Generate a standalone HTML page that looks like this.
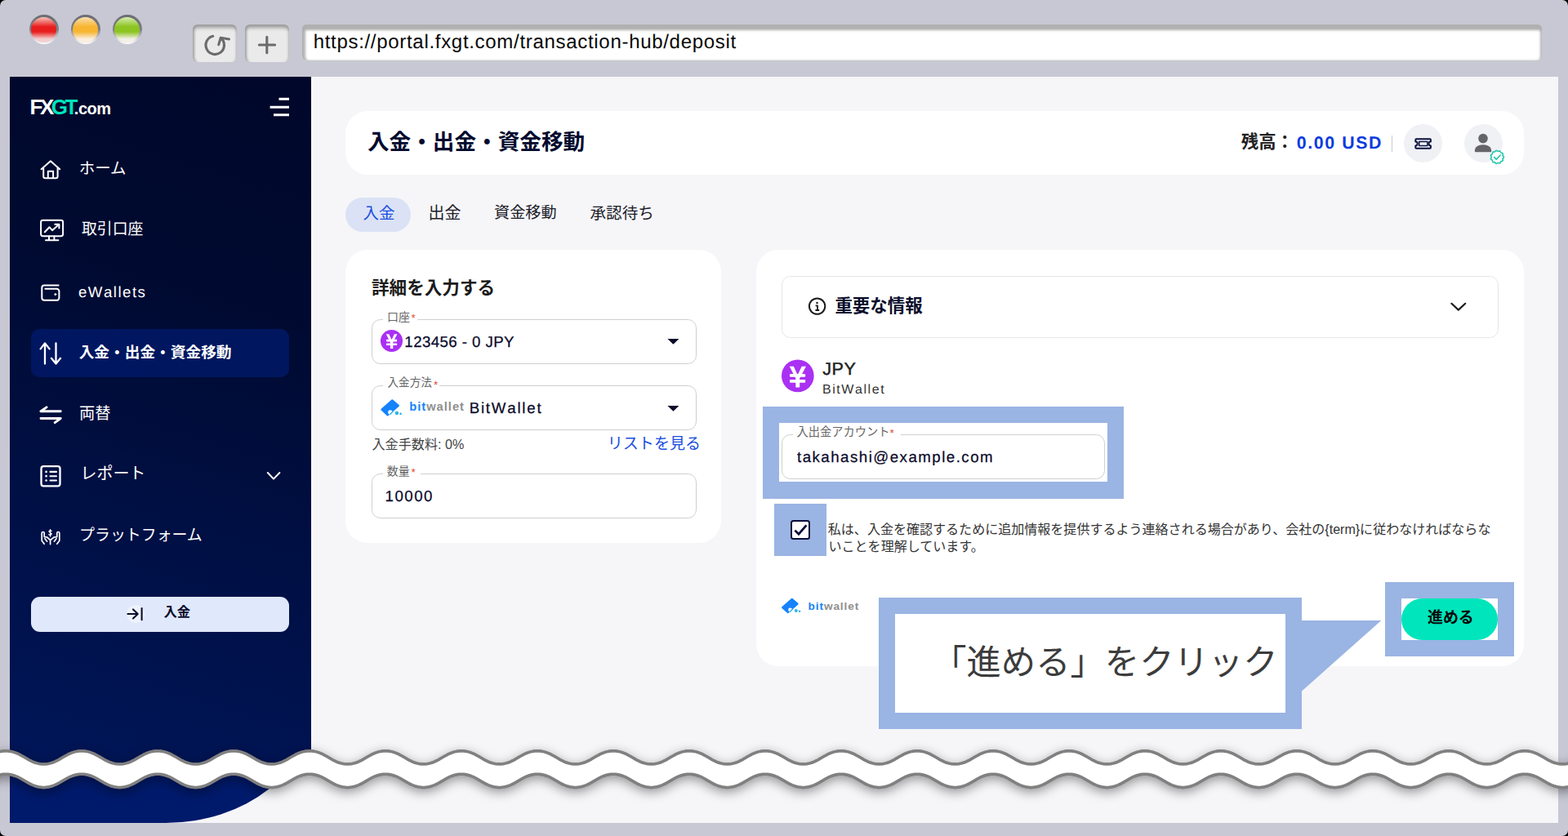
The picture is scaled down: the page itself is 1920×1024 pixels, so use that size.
<!DOCTYPE html><html lang="ja"><head><meta charset="utf-8"><title>FXGT deposit</title><style>
*{margin:0;padding:0;box-sizing:border-box}
html,body{width:1920px;height:1024px;overflow:hidden;background:#000}
body{position:relative;font-family:"Liberation Sans","Noto Sans CJK JP",sans-serif}
.a,.ht,.lt{position:absolute}
.ht{line-height:1.2;white-space:nowrap;font-family:"Liberation Sans","Noto Sans CJK JP",sans-serif;pointer-events:none}
.lt{white-space:nowrap;font-kerning:none;text-rendering:geometricPrecision;font-family:"Liberation Sans",sans-serif}
#win{left:0;top:0;width:1920px;height:1024px;background:#c8c8d4;border-radius:7px;overflow:hidden}
.light{width:36px;height:36px;border-radius:50%;top:18px;background:linear-gradient(180deg,#6c6c72 0%,#7e7e84 50%,#c4c4ca 76%,#ffffff 100%)}
.light i{position:absolute;left:2.5px;top:2.5px;right:2.5px;bottom:2.5px;border-radius:50%;display:block}
.cbtn{top:30px;height:46px;background:#eaeaea;border-radius:6px;box-shadow:inset 0 7px 4px -3px #9a9a9a, inset 5px 0 3px -3px #a0a0a0, inset -4px 0 3px -3px #b4b4b4}
#url{left:370px;top:30px;width:1517.8px;height:44px;background:#fff;border-radius:5px;box-shadow:inset 0 10px 3px -3px #b0b0b0, inset 7px 0 3px -3px #b2b2b2, inset -5px 0 3px -3px #b4b4b4, inset 0 -2px 2px -1px #e4e4e4}
#content{left:12px;top:94px;width:1896px;height:914px;background:#f6f6f9;overflow:hidden}
.card{background:#fff;border-radius:27px}
.field{border:1.33px solid #cfcfcf;border-radius:10.67px}
.notch{background:#fff;height:4px}
.md{-webkit-text-stroke:.45px currentColor}.sm{-webkit-text-stroke:.25px currentColor}
</style></head><body>
<div id="win" class="a">
<div class="a light" style="left:35.7px"><i style="background:linear-gradient(180deg,#f6c4bc 0%,#e81e1e 38%,#e81e1e 58%,#f3cfcf 86%,#f3cfcf 100%)"></i></div>
<div class="a light" style="left:86.7px"><i style="background:linear-gradient(180deg,#fbe0b0 0%,#f7b531 38%,#f7b531 58%,#fbeede 86%,#fbeede 100%)"></i></div>
<div class="a light" style="left:137.7px"><i style="background:linear-gradient(180deg,#d6edb0 0%,#8cc421 38%,#8cc421 58%,#f3f0e6 86%,#f3f0e6 100%)"></i></div>
<div class="a cbtn" style="left:236px;width:54px"></div>
<div class="a cbtn" style="left:300px;width:54px"></div>
<div class="a" id="url"></div>
<span class="lt " style="left:383.64px;top:40.00px;font-size:24.00px;line-height:24.00px;letter-spacing:0.695px;color:#080808;">https://portal.fxgt.com/transaction-hub/deposit</span>
<div class="a" id="content"></div>
<div class="a" style="left:12px;top:94px;width:369.2px;height:848px;background:linear-gradient(197deg,#00072a 0%,#000a30 30%,#001046 66%,#001659 100%)"></div>
<div class="a" style="left:12px;top:942px;width:369.2px;height:65.8px;overflow:hidden"><div class="a" style="left:0;top:-300px;width:369.2px;height:365.8px;background:#001a6b;border-bottom-right-radius:178px 141px"></div></div>
<div class="a" style="left:37.7px;top:402.8px;width:316.3px;height:59px;border-radius:10.67px;background:linear-gradient(90deg,#001660,#00175f)"></div>
<div class="a" style="left:37.7px;top:730.5px;width:316.3px;height:43.5px;border-radius:11px;background:#e0e8fb"></div>
<div class="a" style="left:154.6px;top:740.5px;width:22px;height:22px;border-radius:50%;background:#eef2fb"></div>
<div class="a card" style="left:423px;top:136px;width:1443px;height:78.2px"></div>
<div class="a" style="left:1704px;top:165.6px;width:1.33px;height:20.3px;background:#c9c9c9"></div>
<div class="a" style="left:1718.7px;top:152.3px;width:47px;height:47px;border-radius:50%;background:#f0f1f5"></div>
<div class="a" style="left:1792.6px;top:152.3px;width:47px;height:47px;border-radius:50%;background:#f0f1f5"></div>
<div class="a" style="left:423px;top:241.8px;width:80px;height:42.7px;border-radius:22px;background:#dbe2f5"></div>
<div class="a card" style="left:423px;top:305.5px;width:460px;height:359.7px"></div>
<div class="a field" style="left:455px;top:390.7px;width:397.5px;height:55px"></div>
<div class="a notch" style="left:468.5px;top:389.7px;width:42.5px"></div>
<div class="a field" style="left:455px;top:472.2px;width:397.5px;height:54.5px"></div>
<div class="a notch" style="left:468.5px;top:471.2px;width:69.5px"></div>
<div class="a field" style="left:455px;top:580.2px;width:397.5px;height:54.7px"></div>
<div class="a notch" style="left:468.5px;top:579.2px;width:46.5px"></div>
<div class="a card" style="left:926.3px;top:305.5px;width:940px;height:510.8px"></div>
<div class="a" style="left:957px;top:337.5px;width:877.5px;height:76px;border:1.33px solid #e6e6e8;border-radius:10.67px"></div>
<div class="a" style="left:934px;top:498px;width:441.8px;height:112.8px;background:#9ab4e3"></div>
<div class="a" style="left:954px;top:517.5px;width:402px;height:72.5px;background:#fff"></div>
<div class="a field" style="left:957px;top:532px;width:395.5px;height:55.2px"></div>
<div class="a notch" style="left:970.5px;top:531px;width:132.0px"></div>
<div class="a" style="left:948.4px;top:617px;width:63.3px;height:63.5px;background:#9ab4e3"></div>
<div class="a" style="left:968.3px;top:637px;width:23.4px;height:23.8px;border:2.8px solid #0a0d3a;border-radius:3.5px;background:#fff"></div>
<div class="a" style="left:1696.3px;top:712.5px;width:158px;height:91.3px;background:#9ab4e3"></div>
<div class="a" style="left:1715.8px;top:732.5px;width:118.5px;height:51.3px;background:#fff"></div>
<div class="a" style="left:1716.2px;top:732.5px;width:118.1px;height:51.3px;border-radius:26px;background:#00e5bc"></div>
<svg class="a" style="left:0;top:0" width="1920" height="1024"><path fill="#9ab4e3" d="M1593.5 760H1691.3L1593.5 847z"/></svg>
<div class="a" style="left:1076.2px;top:731.8px;width:517.5px;height:161.5px;background:#9ab4e3"></div>
<div class="a" style="left:1095.8px;top:751.8px;width:478.5px;height:121.5px;background:#fff"></div>
<svg class="a" style="left:0;top:0" width="1920" height="1024" viewBox="0 0 1920 1024" fill="none" stroke-linecap="round" stroke-linejoin="round">
<!-- reload / plus -->
<g stroke="#6b6b6b" stroke-width="3.1">
<path d="M260.72 44.34A11.25 11.25 0 1 0 270.33 46.56"/>
<path d="M280.5 47.9L270.3 46.3 267.7 54.8" stroke-width="3"/>
<path d="M317.4 55H336.6M326.8 45.4V64.8" stroke-width="3.1"/>
</g>
<!-- hamburger -->
<g stroke="#fff" stroke-width="3" stroke-linecap="butt">
<path d="M341.5 121.3H354M330.6 131.2H354M335 140.7H354"/>
</g>
<!-- sidebar icons -->
<g stroke="#fff" stroke-width="2">
<path d="M50.6 207.3L61.9 197.3 73.2 207.3M53.2 205.5V216a2.3 2.3 0 0 0 2.3 2.3H68.3a2.3 2.3 0 0 0 2.3-2.3V205.5M58.8 217.8V209.8H65.1V217.8"/>
<rect x="50.1" y="269.8" width="27" height="19.4" rx="2.4"/>
<path d="M60 289.6V293.6M66.4 289.6V293.6M56 294.2H71.4M54.8 284.2L60.5 278.2 64 282.2 72 275M67.3 274.7H72.4V279.6"/>
<path d="M71.6 349.4H54.3a3 3 0 0 0-3 3V364.8a3 3 0 0 0 3 3H69.4a3 3 0 0 0 3-3V356.8a3 3 0 0 0-3-3H55.4"/>
<circle cx="67.8" cy="360.6" r="1" fill="#fff" stroke-width="1"/>
<path d="M55 445.5V420.6M49.6 427.4L55 420.4 60.6 427.4M68.5 420.4V445.4M62.9 438.8L68.5 445.6 74.1 438.8" stroke-width="2.3"/>
<path d="M50 503.8H74.2M50 503.8L57 498.9M50 512.5H74.2M74.2 512.5L67.2 517.6" stroke-width="2.9"/>
<rect x="50.5" y="571.2" width="23" height="24.2" rx="2.8" stroke-width="2.3"/>
<path d="M61.5 577.9H69M61.5 583.2H69M61.5 588.5H69" stroke-width="2.1"/>
<path d="M56.6 577.9h.01M56.6 583.2h.01M56.6 588.5h.01" stroke-width="2.7"/>
<path d="M327.8 579L335 586.6 342.4 579" stroke-width="2"/>
</g>
<!-- platform (hands + $) -->
<g stroke="#fff" stroke-width="1.7">
<path d="M54.2 666.2L51.2 662.2V653a1.5 1.5 0 0 1 3 0V657.6L57.6 658 61.6 661.6V666.6M55 659.8L57.6 663.2"/>
<path d="M69.8 666.2L72.8 662.2V653a1.5 1.5 0 0 0-3 0V657.6L66.2 658 61.6 661.6M69 659.8L66.4 663.2"/>
<path d="M63.2 650.3C62.6 649.6 60 649.6 60 651.1 60 652.7 63.2 652.3 63.2 654 63.2 655.6 60.4 655.5 59.8 654.6M61.6 648.6V657" stroke-width="1.3"/>
</g>
<!-- deposit button icon -->
<g stroke="#0a0d2c" stroke-width="2">
<path d="M156.4 752H168.6M163 746.4L168.7 752 163 757.6M173.6 745V759.2" stroke-width="2.1"/>
</g>
<!-- header: ticket -->
<g stroke="#0a1240" stroke-width="2">
<path d="M1733.3 171.2a1 1 0 0 1 1-1H1750.9a1 1 0 0 1 1 1V173.6a2.4 2.4 0 0 0 0 4.8V180.8a1 1 0 0 1-1 1H1734.3a1 1 0 0 1-1-1V178.4a2.4 2.4 0 0 0 0-4.8z"/>
<rect x="1737.7" y="173.5" width="10.2" height="5" stroke-width="1.5"/>
</g>
<!-- person -->
<g fill="#646469" stroke="none">
<circle cx="1816" cy="169.6" r="5.8"/>
<path d="M1805.8 185.2C1805.8 180 1810 177.3 1816 177.3S1826.2 180 1826.2 185.2a1 1 0 0 1-1 1H1806.8a1 1 0 0 1-1-1z"/>
</g>
<!-- verified badge -->
<g>
<path fill="#fff" stroke="#1ac5a5" stroke-width="1.5" d="M1841.5 192.4L1841.4 192.8L1841.1 193.2L1840.7 193.6L1840.4 193.9L1840.1 194.2L1840.0 194.6L1840.1 195.0L1840.2 195.5L1840.3 196.0L1840.3 196.4L1840.1 196.8L1839.8 197.1L1839.4 197.3L1838.9 197.4L1838.4 197.5L1838.0 197.6L1837.8 197.9L1837.6 198.3L1837.4 198.7L1837.2 199.2L1837.0 199.6L1836.6 199.8L1836.2 199.9L1835.7 199.8L1835.2 199.6L1834.8 199.4L1834.4 199.4L1834.0 199.5L1833.7 199.7L1833.3 200.0L1832.9 200.3L1832.5 200.5L1832.0 200.4L1831.6 200.2L1831.3 199.9L1831.0 199.5L1830.7 199.1L1830.4 198.8L1830.1 198.7L1829.6 198.7L1829.1 198.8L1828.6 198.8L1828.2 198.7L1827.9 198.4L1827.7 198.0L1827.6 197.6L1827.5 197.1L1827.5 196.6L1827.4 196.2L1827.1 196.0L1826.8 195.7L1826.3 195.5L1825.9 195.2L1825.6 194.9L1825.4 194.5L1825.5 194.1L1825.7 193.6L1826.0 193.2L1826.2 192.8L1826.2 192.4L1826.2 192.0L1826.0 191.6L1825.7 191.2L1825.5 190.7L1825.4 190.3L1825.6 189.9L1825.9 189.6L1826.3 189.3L1826.8 189.1L1827.1 188.8L1827.4 188.6L1827.5 188.2L1827.5 187.7L1827.6 187.2L1827.7 186.8L1827.9 186.4L1828.2 186.1L1828.6 186.0L1829.1 186.0L1829.6 186.1L1830.1 186.1L1830.4 186.0L1830.7 185.7L1831.0 185.3L1831.3 184.9L1831.6 184.6L1832.0 184.4L1832.5 184.3L1832.9 184.5L1833.3 184.8L1833.7 185.1L1834.0 185.3L1834.4 185.4L1834.8 185.4L1835.2 185.2L1835.7 185.0L1836.2 184.9L1836.6 185.0L1837.0 185.2L1837.2 185.6L1837.4 186.1L1837.6 186.5L1837.8 186.9L1838.0 187.2L1838.4 187.3L1838.9 187.4L1839.4 187.5L1839.8 187.7L1840.1 188.0L1840.3 188.4L1840.3 188.8L1840.2 189.3L1840.1 189.8L1840.0 190.2L1840.1 190.6L1840.4 190.9L1840.7 191.2L1841.1 191.6L1841.4 192.0z"/>
<path d="M1829.6 192.6L1832.2 195.2 1837.2 190" stroke="#1ac5a5" stroke-width="1.6"/>
</g>
<!-- yen small -->
<g stroke="none">
<circle cx="479.5" cy="417.5" r="13.55" fill="#aa30f3"/>
<path fill="#fff" d="M472.8 409.3H476.3L479.55 416.2 482.85 409.3H486.4L481.3 419.2V427.1H477.9V419.2z"/>
<rect x="473" y="415.8" width="13.1" height="2.6" rx=".7" fill="#fff"/><rect x="473" y="420.5" width="13.1" height="2.6" rx=".7" fill="#fff"/>
<circle cx="976.8" cy="460.4" r="19.85" fill="#aa30f3"/>
<path fill="#fff" d="M966.75 448.7H971.8L976.7 459.2 981.7 448.7H987L979.2 463.5V474.6H974.3V463.5z"/>
<rect x="967" y="457.9" width="19.2" height="3.8" rx="1" fill="#fff"/><rect x="967" y="465" width="19.2" height="3.8" rx="1" fill="#fff"/>
</g>
<!-- dropdown arrows -->
<path d="M817.4 415.1H831.4L824.4 421.8zM817.4 497H831.4L824.4 503.7z" fill="#0a0a2a" stroke="none"/>
<!-- info -->
<g stroke="#1c1c1c" stroke-width="2">
<circle cx="1000.6" cy="375.1" r="9.7"/>
<path d="M998.6 374.4H1001V379.8M998.4 380H1003.2" stroke-width="1.8" stroke-linecap="butt"/>
<circle cx="1000.5" cy="371" r="1.25" fill="#1c1c1c" stroke="none"/>
<path d="M1777.4 371.8L1785.8 379.6 1794.2 371.8" stroke-width="2.2"/>
</g>
<!-- check -->
<path d="M973.4 649.6L978 654.2 987.4 643.4" stroke="#0a0d3a" stroke-width="2.7" stroke-linecap="butt" stroke-linejoin="miter"/>
<!-- bitwallet logos -->
<g id="bw1" stroke="none">
<path d="M467.5 501.7L480.3 490.4 487.8 496.8 474.7 508.3z" fill="#1583fb" stroke="#1583fb" stroke-width="2.4" stroke-linejoin="round"/>
<circle cx="477.9" cy="504.9" r="2.7" fill="#fff"/>
<path d="M478 507.2L481 504" stroke="#2db4e8" stroke-width="1.6" stroke-linecap="round"/>
<circle cx="485.9" cy="506" r="2.2" fill="#2db4e8"/>
<circle cx="490.6" cy="506.8" r="1.4" fill="#2db4e8"/>
</g>
<use href="#bw1" transform="translate(957 732.6) scale(0.905) translate(-466.2 -489)"/>
</svg>

<span class="ht" style="left:36.5px;top:118.4px;font-size:26px;line-height:26px;font-weight:bold;letter-spacing:-3.5px;color:#ffffff;">FX<span style="color:#00e5bc">GT</span><span style="font-size:20px;letter-spacing:-0.5px;margin-left:-1px">.com</span></span>
<span class="ht" style="left:501.2px;top:490.2px;font-size:14.69px;font-weight:bold;letter-spacing:1px;color:#8f8f8f;"><span style="color:#1583fb">bit</span>wallet</span>
<span class="ht" style="left:989.5px;top:735.1px;font-size:13.65px;font-weight:bold;letter-spacing:0.9px;color:#8f8f8f;"><span style="color:#1583fb">bit</span>wallet</span>
<span class="ht" style="left:96.7px;top:195.3px;font-size:19.47px;color:#ffffff;">ホーム</span>
<span class="ht" style="left:100.0px;top:270.4px;font-size:18.87px;color:#ffffff;">取引口座</span>
<span class="lt " style="left:95.91px;top:349.00px;font-size:18.67px;line-height:18.67px;letter-spacing:1.497px;color:#ffffff;">eWallets</span>
<span class="ht" style="left:96.7px;top:420.6px;font-size:18.71px;font-weight:bold;color:#ffffff;">入金・出金・資金移動</span>
<span class="ht" style="left:97.1px;top:495.0px;font-size:19.28px;color:#ffffff;">両替</span>
<span class="ht" style="left:98.5px;top:569.3px;font-size:19.96px;color:#ffffff;">レポート</span>
<span class="ht" style="left:97.1px;top:644.7px;font-size:18.91px;color:#ffffff;">プラットフォーム</span>
<span class="ht" style="left:200.4px;top:740.1px;font-size:16.37px;font-weight:bold;color:#0a0d2c;">入金</span>
<span class="ht" style="left:450.0px;top:158.6px;font-size:26.62px;font-weight:bold;color:#020a2e;">入金・出金・資金移動</span>
<span class="ht" style="left:1519.8px;top:162.2px;font-size:21.40px;font-weight:bold;color:#222;">残高：</span>
<span class="lt " style="left:1587.86px;top:165.00px;font-size:21.33px;line-height:21.33px;letter-spacing:1.581px;color:#0b3be0;font-weight:bold;">0.00 USD</span>
<span class="ht" style="left:444.5px;top:249.8px;font-size:19.45px;color:#1c4fe0;">入金</span>
<span class="ht" style="left:524.5px;top:249.5px;font-size:19.97px;color:#1c1c28;">出金</span>
<span class="ht" style="left:605.0px;top:250.0px;font-size:19.15px;color:#1c1c28;">資金移動</span>
<span class="ht" style="left:722.5px;top:249.7px;font-size:19.61px;color:#1c1c28;">承認待ち</span>
<span class="ht" style="left:455.0px;top:339.6px;font-size:21.59px;font-weight:bold;color:#1c1c1c;">詳細を入力する</span>
<span class="ht" style="left:474.0px;top:379.7px;font-size:14.00px;color:#666;">口座</span>
<span class="ht" style="left:474.5px;top:461.2px;font-size:13.63px;color:#666;">入金方法</span>
<span class="ht" style="left:473.8px;top:569.1px;font-size:13.97px;color:#666;">数量</span>
<span class="ht" style="left:975.5px;top:520.5px;font-size:14.25px;color:#666;">入出金アカウント</span>
<span class="lt" style="left:503.6px;top:383.2px;font-size:13.5px;line-height:13.5px;color:#e0482e">*</span>
<span class="lt" style="left:531px;top:464.5px;font-size:13.5px;line-height:13.5px;color:#e0482e">*</span>
<span class="lt" style="left:503.6px;top:572.4px;font-size:13.5px;line-height:13.5px;color:#e0482e">*</span>
<span class="lt" style="left:1089.4px;top:523.6px;font-size:13.5px;line-height:13.5px;color:#e0482e">*</span>
<span class="lt sm" style="left:495.33px;top:410.00px;font-size:18.67px;line-height:18.67px;letter-spacing:0.433px;color:#0a0a2a;">123456 - 0 JPY</span>
<span class="lt sm" style="left:574.72px;top:491.00px;font-size:18.67px;line-height:18.67px;letter-spacing:1.782px;color:#0a0a2a;">BitWallet</span>
<span class="ht" style="left:455.5px;top:534.8px;font-size:16.13px;color:#444;">入金手数料: 0%</span>
<span class="ht" style="left:743.8px;top:533.0px;font-size:19.04px;color:#1c4fe0;">リストを見る</span>
<span class="lt sm" style="left:471.58px;top:599.00px;font-size:18.67px;line-height:18.67px;letter-spacing:1.496px;color:#0a0a2a;">10000</span>
<span class="ht" style="left:1022.4px;top:362.5px;font-size:21.47px;font-weight:bold;color:#0a0d2c;">重要な情報</span>
<span class="lt md" style="left:1007.16px;top:441.00px;font-size:21.60px;line-height:21.60px;letter-spacing:0.599px;color:#222;">JPY</span>
<span class="lt " style="left:1006.94px;top:470.00px;font-size:16.00px;line-height:16.00px;letter-spacing:1.569px;color:#333;">BitWallet</span>
<span class="lt sm" style="left:975.97px;top:551.00px;font-size:18.67px;line-height:18.67px;letter-spacing:1.493px;color:#0a0a2a;">takahashi@example.com</span>
<span class="ht" style="left:1013.8px;top:639.2px;font-size:16.04px;color:#333;">私は、入金を確認するために追加情報を提供するよう連絡される場合があり、会社の{term}に従わなければならな</span>
<span class="ht" style="left:1014.5px;top:659.5px;font-size:16.04px;color:#333;">いことを理解しています。</span>
<span class="ht" style="left:1748.0px;top:746.1px;font-size:18.93px;font-weight:bold;color:#0a0a0a;">進める</span>
<span class="ht" style="left:1141.2px;top:787.3px;font-size:42.34px;color:#3c3c3c;">「進める」をクリック</span>
<svg class="a" style="left:0;top:0" width="1920" height="1024" viewBox="0 0 1920 1024" stroke-linejoin="round"><defs><path id="wp" d="M-86.0 919.8L-83.0 919.9L-80.0 920.4L-77.0 921.1L-74.0 922.1L-71.0 923.3L-68.0 924.9L-65.0 926.6L-62.0 928.3L-59.0 930.1L-56.0 931.7L-53.0 933.1L-50.0 934.3L-47.0 935.1L-44.0 935.7L-41.0 936.0L-38.0 936.0L-35.0 935.7L-32.0 935.1L-29.0 934.3L-26.0 933.1L-23.0 931.7L-20.0 930.1L-17.0 928.3L-14.0 926.6L-11.0 924.9L-8.0 923.3L-5.0 922.1L-2.0 921.1L1.0 920.4L4.0 919.9L7.0 919.8L10.0 919.9L13.0 920.4L16.0 921.1L19.0 922.1L22.0 923.3L25.0 924.9L28.0 926.6L31.0 928.3L34.0 930.1L37.0 931.7L40.0 933.1L43.0 934.3L46.0 935.1L49.0 935.7L52.0 936.0L55.0 936.0L58.0 935.7L61.0 935.1L64.0 934.3L67.0 933.1L70.0 931.7L73.0 930.1L76.0 928.3L79.0 926.6L82.0 924.9L85.0 923.3L88.0 922.1L91.0 921.1L94.0 920.4L97.0 919.9L100.0 919.8L103.0 919.9L106.0 920.4L109.0 921.1L112.0 922.1L115.0 923.3L118.0 924.9L121.0 926.6L124.0 928.3L127.0 930.1L130.0 931.7L133.0 933.1L136.0 934.3L139.0 935.1L142.0 935.7L145.0 936.0L148.0 936.0L151.0 935.7L154.0 935.1L157.0 934.3L160.0 933.1L163.0 931.7L166.0 930.1L169.0 928.3L172.0 926.6L175.0 924.9L178.0 923.3L181.0 922.1L184.0 921.1L187.0 920.4L190.0 919.9L193.0 919.8L196.0 919.9L199.0 920.4L202.0 921.1L205.0 922.1L208.0 923.3L211.0 924.9L214.0 926.6L217.0 928.3L220.0 930.1L223.0 931.7L226.0 933.1L229.0 934.3L232.0 935.1L235.0 935.7L238.0 936.0L241.0 936.0L244.0 935.7L247.0 935.1L250.0 934.3L253.0 933.1L256.0 931.7L259.0 930.1L262.0 928.3L265.0 926.6L268.0 924.9L271.0 923.3L274.0 922.1L277.0 921.1L280.0 920.4L283.0 919.9L286.0 919.8L289.0 919.9L292.0 920.4L295.0 921.1L298.0 922.1L301.0 923.3L304.0 924.9L307.0 926.6L310.0 928.3L313.0 930.1L316.0 931.7L319.0 933.1L322.0 934.3L325.0 935.1L328.0 935.7L331.0 936.0L334.0 936.0L337.0 935.7L340.0 935.1L343.0 934.3L346.0 933.1L349.0 931.7L352.0 930.1L355.0 928.3L358.0 926.6L361.0 924.9L364.0 923.3L367.0 922.1L370.0 921.1L373.0 920.4L376.0 919.9L379.0 919.8L382.0 919.9L385.0 920.4L388.0 921.1L391.0 922.1L394.0 923.3L397.0 924.9L400.0 926.6L403.0 928.3L406.0 930.1L409.0 931.7L412.0 933.1L415.0 934.3L418.0 935.1L421.0 935.7L424.0 936.0L427.0 936.0L430.0 935.7L433.0 935.1L436.0 934.3L439.0 933.1L442.0 931.7L445.0 930.1L448.0 928.3L451.0 926.6L454.0 924.9L457.0 923.3L460.0 922.1L463.0 921.1L466.0 920.4L469.0 919.9L472.0 919.8L475.0 919.9L478.0 920.4L481.0 921.1L484.0 922.1L487.0 923.3L490.0 924.9L493.0 926.6L496.0 928.3L499.0 930.1L502.0 931.7L505.0 933.1L508.0 934.3L511.0 935.1L514.0 935.7L517.0 936.0L520.0 936.0L523.0 935.7L526.0 935.1L529.0 934.3L532.0 933.1L535.0 931.7L538.0 930.1L541.0 928.3L544.0 926.6L547.0 924.9L550.0 923.3L553.0 922.1L556.0 921.1L559.0 920.4L562.0 919.9L565.0 919.8L568.0 919.9L571.0 920.4L574.0 921.1L577.0 922.1L580.0 923.3L583.0 924.9L586.0 926.6L589.0 928.3L592.0 930.1L595.0 931.7L598.0 933.1L601.0 934.3L604.0 935.1L607.0 935.7L610.0 936.0L613.0 936.0L616.0 935.7L619.0 935.1L622.0 934.3L625.0 933.1L628.0 931.7L631.0 930.1L634.0 928.3L637.0 926.6L640.0 924.9L643.0 923.3L646.0 922.1L649.0 921.1L652.0 920.4L655.0 919.9L658.0 919.8L661.0 919.9L664.0 920.4L667.0 921.1L670.0 922.1L673.0 923.3L676.0 924.9L679.0 926.6L682.0 928.3L685.0 930.1L688.0 931.7L691.0 933.1L694.0 934.3L697.0 935.1L700.0 935.7L703.0 936.0L706.0 936.0L709.0 935.7L712.0 935.1L715.0 934.3L718.0 933.1L721.0 931.7L724.0 930.1L727.0 928.3L730.0 926.6L733.0 924.9L736.0 923.3L739.0 922.1L742.0 921.1L745.0 920.4L748.0 919.9L751.0 919.8L754.0 919.9L757.0 920.4L760.0 921.1L763.0 922.1L766.0 923.3L769.0 924.9L772.0 926.6L775.0 928.3L778.0 930.1L781.0 931.7L784.0 933.1L787.0 934.3L790.0 935.1L793.0 935.7L796.0 936.0L799.0 936.0L802.0 935.7L805.0 935.1L808.0 934.3L811.0 933.1L814.0 931.7L817.0 930.1L820.0 928.3L823.0 926.6L826.0 924.9L829.0 923.3L832.0 922.1L835.0 921.1L838.0 920.4L841.0 919.9L844.0 919.8L847.0 919.9L850.0 920.4L853.0 921.1L856.0 922.1L859.0 923.3L862.0 924.9L865.0 926.6L868.0 928.3L871.0 930.1L874.0 931.7L877.0 933.1L880.0 934.3L883.0 935.1L886.0 935.7L889.0 936.0L892.0 936.0L895.0 935.7L898.0 935.1L901.0 934.3L904.0 933.1L907.0 931.7L910.0 930.1L913.0 928.3L916.0 926.6L919.0 924.9L922.0 923.3L925.0 922.1L928.0 921.1L931.0 920.4L934.0 919.9L937.0 919.8L940.0 919.9L943.0 920.4L946.0 921.1L949.0 922.1L952.0 923.3L955.0 924.9L958.0 926.6L961.0 928.3L964.0 930.1L967.0 931.7L970.0 933.1L973.0 934.3L976.0 935.1L979.0 935.7L982.0 936.0L985.0 936.0L988.0 935.7L991.0 935.1L994.0 934.3L997.0 933.1L1000.0 931.7L1003.0 930.1L1006.0 928.3L1009.0 926.6L1012.0 924.9L1015.0 923.3L1018.0 922.1L1021.0 921.1L1024.0 920.4L1027.0 919.9L1030.0 919.8L1033.0 919.9L1036.0 920.4L1039.0 921.1L1042.0 922.1L1045.0 923.3L1048.0 924.9L1051.0 926.6L1054.0 928.3L1057.0 930.1L1060.0 931.7L1063.0 933.1L1066.0 934.3L1069.0 935.1L1072.0 935.7L1075.0 936.0L1078.0 936.0L1081.0 935.7L1084.0 935.1L1087.0 934.3L1090.0 933.1L1093.0 931.7L1096.0 930.1L1099.0 928.3L1102.0 926.6L1105.0 924.9L1108.0 923.3L1111.0 922.1L1114.0 921.1L1117.0 920.4L1120.0 919.9L1123.0 919.8L1126.0 919.9L1129.0 920.4L1132.0 921.1L1135.0 922.1L1138.0 923.3L1141.0 924.9L1144.0 926.6L1147.0 928.3L1150.0 930.1L1153.0 931.7L1156.0 933.1L1159.0 934.3L1162.0 935.1L1165.0 935.7L1168.0 936.0L1171.0 936.0L1174.0 935.7L1177.0 935.1L1180.0 934.3L1183.0 933.1L1186.0 931.7L1189.0 930.1L1192.0 928.3L1195.0 926.6L1198.0 924.9L1201.0 923.3L1204.0 922.1L1207.0 921.1L1210.0 920.4L1213.0 919.9L1216.0 919.8L1219.0 919.9L1222.0 920.4L1225.0 921.1L1228.0 922.1L1231.0 923.3L1234.0 924.9L1237.0 926.6L1240.0 928.3L1243.0 930.1L1246.0 931.7L1249.0 933.1L1252.0 934.3L1255.0 935.1L1258.0 935.7L1261.0 936.0L1264.0 936.0L1267.0 935.7L1270.0 935.1L1273.0 934.3L1276.0 933.1L1279.0 931.7L1282.0 930.1L1285.0 928.3L1288.0 926.6L1291.0 924.9L1294.0 923.3L1297.0 922.1L1300.0 921.1L1303.0 920.4L1306.0 919.9L1309.0 919.8L1312.0 919.9L1315.0 920.4L1318.0 921.1L1321.0 922.1L1324.0 923.3L1327.0 924.9L1330.0 926.6L1333.0 928.3L1336.0 930.1L1339.0 931.7L1342.0 933.1L1345.0 934.3L1348.0 935.1L1351.0 935.7L1354.0 936.0L1357.0 936.0L1360.0 935.7L1363.0 935.1L1366.0 934.3L1369.0 933.1L1372.0 931.7L1375.0 930.1L1378.0 928.3L1381.0 926.6L1384.0 924.9L1387.0 923.3L1390.0 922.1L1393.0 921.1L1396.0 920.4L1399.0 919.9L1402.0 919.8L1405.0 919.9L1408.0 920.4L1411.0 921.1L1414.0 922.1L1417.0 923.3L1420.0 924.9L1423.0 926.6L1426.0 928.3L1429.0 930.1L1432.0 931.7L1435.0 933.1L1438.0 934.3L1441.0 935.1L1444.0 935.7L1447.0 936.0L1450.0 936.0L1453.0 935.7L1456.0 935.1L1459.0 934.3L1462.0 933.1L1465.0 931.7L1468.0 930.1L1471.0 928.3L1474.0 926.6L1477.0 924.9L1480.0 923.3L1483.0 922.1L1486.0 921.1L1489.0 920.4L1492.0 919.9L1495.0 919.8L1498.0 919.9L1501.0 920.4L1504.0 921.1L1507.0 922.1L1510.0 923.3L1513.0 924.9L1516.0 926.6L1519.0 928.3L1522.0 930.1L1525.0 931.7L1528.0 933.1L1531.0 934.3L1534.0 935.1L1537.0 935.7L1540.0 936.0L1543.0 936.0L1546.0 935.7L1549.0 935.1L1552.0 934.3L1555.0 933.1L1558.0 931.7L1561.0 930.1L1564.0 928.3L1567.0 926.6L1570.0 924.9L1573.0 923.3L1576.0 922.1L1579.0 921.1L1582.0 920.4L1585.0 919.9L1588.0 919.8L1591.0 919.9L1594.0 920.4L1597.0 921.1L1600.0 922.1L1603.0 923.3L1606.0 924.9L1609.0 926.6L1612.0 928.3L1615.0 930.1L1618.0 931.7L1621.0 933.1L1624.0 934.3L1627.0 935.1L1630.0 935.7L1633.0 936.0L1636.0 936.0L1639.0 935.7L1642.0 935.1L1645.0 934.3L1648.0 933.1L1651.0 931.7L1654.0 930.1L1657.0 928.3L1660.0 926.6L1663.0 924.9L1666.0 923.3L1669.0 922.1L1672.0 921.1L1675.0 920.4L1678.0 919.9L1681.0 919.8L1684.0 919.9L1687.0 920.4L1690.0 921.1L1693.0 922.1L1696.0 923.3L1699.0 924.9L1702.0 926.6L1705.0 928.3L1708.0 930.1L1711.0 931.7L1714.0 933.1L1717.0 934.3L1720.0 935.1L1723.0 935.7L1726.0 936.0L1729.0 936.0L1732.0 935.7L1735.0 935.1L1738.0 934.3L1741.0 933.1L1744.0 931.7L1747.0 930.1L1750.0 928.3L1753.0 926.6L1756.0 924.9L1759.0 923.3L1762.0 922.1L1765.0 921.1L1768.0 920.4L1771.0 919.9L1774.0 919.8L1777.0 919.9L1780.0 920.4L1783.0 921.1L1786.0 922.1L1789.0 923.3L1792.0 924.9L1795.0 926.6L1798.0 928.3L1801.0 930.1L1804.0 931.7L1807.0 933.1L1810.0 934.3L1813.0 935.1L1816.0 935.7L1819.0 936.0L1822.0 936.0L1825.0 935.7L1828.0 935.1L1831.0 934.3L1834.0 933.1L1837.0 931.7L1840.0 930.1L1843.0 928.3L1846.0 926.6L1849.0 924.9L1852.0 923.3L1855.0 922.1L1858.0 921.1L1861.0 920.4L1864.0 919.9L1867.0 919.8L1870.0 919.9L1873.0 920.4L1876.0 921.1L1879.0 922.1L1882.0 923.3L1885.0 924.9L1888.0 926.6L1891.0 928.3L1894.0 930.1L1897.0 931.7L1900.0 933.1L1903.0 934.3L1906.0 935.1L1909.0 935.7L1912.0 936.0L1915.0 936.0L1918.0 935.7L1921.0 935.1L1924.0 934.3L1927.0 933.1L1930.0 931.7L1933.0 930.1L1936.0 928.3L1939.0 926.6L1942.0 924.9L1942.0 953.3L1939.0 955.0L1936.0 956.7L1933.0 958.5L1930.0 960.1L1927.0 961.5L1924.0 962.7L1921.0 963.5L1918.0 964.1L1915.0 964.4L1912.0 964.4L1909.0 964.1L1906.0 963.5L1903.0 962.7L1900.0 961.5L1897.0 960.1L1894.0 958.5L1891.0 956.7L1888.0 955.0L1885.0 953.3L1882.0 951.7L1879.0 950.5L1876.0 949.5L1873.0 948.8L1870.0 948.3L1867.0 948.2L1864.0 948.3L1861.0 948.8L1858.0 949.5L1855.0 950.5L1852.0 951.7L1849.0 953.3L1846.0 955.0L1843.0 956.7L1840.0 958.5L1837.0 960.1L1834.0 961.5L1831.0 962.7L1828.0 963.5L1825.0 964.1L1822.0 964.4L1819.0 964.4L1816.0 964.1L1813.0 963.5L1810.0 962.7L1807.0 961.5L1804.0 960.1L1801.0 958.5L1798.0 956.7L1795.0 955.0L1792.0 953.3L1789.0 951.7L1786.0 950.5L1783.0 949.5L1780.0 948.8L1777.0 948.3L1774.0 948.2L1771.0 948.3L1768.0 948.8L1765.0 949.5L1762.0 950.5L1759.0 951.7L1756.0 953.3L1753.0 955.0L1750.0 956.7L1747.0 958.5L1744.0 960.1L1741.0 961.5L1738.0 962.7L1735.0 963.5L1732.0 964.1L1729.0 964.4L1726.0 964.4L1723.0 964.1L1720.0 963.5L1717.0 962.7L1714.0 961.5L1711.0 960.1L1708.0 958.5L1705.0 956.7L1702.0 955.0L1699.0 953.3L1696.0 951.7L1693.0 950.5L1690.0 949.5L1687.0 948.8L1684.0 948.3L1681.0 948.2L1678.0 948.3L1675.0 948.8L1672.0 949.5L1669.0 950.5L1666.0 951.7L1663.0 953.3L1660.0 955.0L1657.0 956.7L1654.0 958.5L1651.0 960.1L1648.0 961.5L1645.0 962.7L1642.0 963.5L1639.0 964.1L1636.0 964.4L1633.0 964.4L1630.0 964.1L1627.0 963.5L1624.0 962.7L1621.0 961.5L1618.0 960.1L1615.0 958.5L1612.0 956.7L1609.0 955.0L1606.0 953.3L1603.0 951.7L1600.0 950.5L1597.0 949.5L1594.0 948.8L1591.0 948.3L1588.0 948.2L1585.0 948.3L1582.0 948.8L1579.0 949.5L1576.0 950.5L1573.0 951.7L1570.0 953.3L1567.0 955.0L1564.0 956.7L1561.0 958.5L1558.0 960.1L1555.0 961.5L1552.0 962.7L1549.0 963.5L1546.0 964.1L1543.0 964.4L1540.0 964.4L1537.0 964.1L1534.0 963.5L1531.0 962.7L1528.0 961.5L1525.0 960.1L1522.0 958.5L1519.0 956.7L1516.0 955.0L1513.0 953.3L1510.0 951.7L1507.0 950.5L1504.0 949.5L1501.0 948.8L1498.0 948.3L1495.0 948.2L1492.0 948.3L1489.0 948.8L1486.0 949.5L1483.0 950.5L1480.0 951.7L1477.0 953.3L1474.0 955.0L1471.0 956.7L1468.0 958.5L1465.0 960.1L1462.0 961.5L1459.0 962.7L1456.0 963.5L1453.0 964.1L1450.0 964.4L1447.0 964.4L1444.0 964.1L1441.0 963.5L1438.0 962.7L1435.0 961.5L1432.0 960.1L1429.0 958.5L1426.0 956.7L1423.0 955.0L1420.0 953.3L1417.0 951.7L1414.0 950.5L1411.0 949.5L1408.0 948.8L1405.0 948.3L1402.0 948.2L1399.0 948.3L1396.0 948.8L1393.0 949.5L1390.0 950.5L1387.0 951.7L1384.0 953.3L1381.0 955.0L1378.0 956.7L1375.0 958.5L1372.0 960.1L1369.0 961.5L1366.0 962.7L1363.0 963.5L1360.0 964.1L1357.0 964.4L1354.0 964.4L1351.0 964.1L1348.0 963.5L1345.0 962.7L1342.0 961.5L1339.0 960.1L1336.0 958.5L1333.0 956.7L1330.0 955.0L1327.0 953.3L1324.0 951.7L1321.0 950.5L1318.0 949.5L1315.0 948.8L1312.0 948.3L1309.0 948.2L1306.0 948.3L1303.0 948.8L1300.0 949.5L1297.0 950.5L1294.0 951.7L1291.0 953.3L1288.0 955.0L1285.0 956.7L1282.0 958.5L1279.0 960.1L1276.0 961.5L1273.0 962.7L1270.0 963.5L1267.0 964.1L1264.0 964.4L1261.0 964.4L1258.0 964.1L1255.0 963.5L1252.0 962.7L1249.0 961.5L1246.0 960.1L1243.0 958.5L1240.0 956.7L1237.0 955.0L1234.0 953.3L1231.0 951.7L1228.0 950.5L1225.0 949.5L1222.0 948.8L1219.0 948.3L1216.0 948.2L1213.0 948.3L1210.0 948.8L1207.0 949.5L1204.0 950.5L1201.0 951.7L1198.0 953.3L1195.0 955.0L1192.0 956.7L1189.0 958.5L1186.0 960.1L1183.0 961.5L1180.0 962.7L1177.0 963.5L1174.0 964.1L1171.0 964.4L1168.0 964.4L1165.0 964.1L1162.0 963.5L1159.0 962.7L1156.0 961.5L1153.0 960.1L1150.0 958.5L1147.0 956.7L1144.0 955.0L1141.0 953.3L1138.0 951.7L1135.0 950.5L1132.0 949.5L1129.0 948.8L1126.0 948.3L1123.0 948.2L1120.0 948.3L1117.0 948.8L1114.0 949.5L1111.0 950.5L1108.0 951.7L1105.0 953.3L1102.0 955.0L1099.0 956.7L1096.0 958.5L1093.0 960.1L1090.0 961.5L1087.0 962.7L1084.0 963.5L1081.0 964.1L1078.0 964.4L1075.0 964.4L1072.0 964.1L1069.0 963.5L1066.0 962.7L1063.0 961.5L1060.0 960.1L1057.0 958.5L1054.0 956.7L1051.0 955.0L1048.0 953.3L1045.0 951.7L1042.0 950.5L1039.0 949.5L1036.0 948.8L1033.0 948.3L1030.0 948.2L1027.0 948.3L1024.0 948.8L1021.0 949.5L1018.0 950.5L1015.0 951.7L1012.0 953.3L1009.0 955.0L1006.0 956.7L1003.0 958.5L1000.0 960.1L997.0 961.5L994.0 962.7L991.0 963.5L988.0 964.1L985.0 964.4L982.0 964.4L979.0 964.1L976.0 963.5L973.0 962.7L970.0 961.5L967.0 960.1L964.0 958.5L961.0 956.7L958.0 955.0L955.0 953.3L952.0 951.7L949.0 950.5L946.0 949.5L943.0 948.8L940.0 948.3L937.0 948.2L934.0 948.3L931.0 948.8L928.0 949.5L925.0 950.5L922.0 951.7L919.0 953.3L916.0 955.0L913.0 956.7L910.0 958.5L907.0 960.1L904.0 961.5L901.0 962.7L898.0 963.5L895.0 964.1L892.0 964.4L889.0 964.4L886.0 964.1L883.0 963.5L880.0 962.7L877.0 961.5L874.0 960.1L871.0 958.5L868.0 956.7L865.0 955.0L862.0 953.3L859.0 951.7L856.0 950.5L853.0 949.5L850.0 948.8L847.0 948.3L844.0 948.2L841.0 948.3L838.0 948.8L835.0 949.5L832.0 950.5L829.0 951.7L826.0 953.3L823.0 955.0L820.0 956.7L817.0 958.5L814.0 960.1L811.0 961.5L808.0 962.7L805.0 963.5L802.0 964.1L799.0 964.4L796.0 964.4L793.0 964.1L790.0 963.5L787.0 962.7L784.0 961.5L781.0 960.1L778.0 958.5L775.0 956.7L772.0 955.0L769.0 953.3L766.0 951.7L763.0 950.5L760.0 949.5L757.0 948.8L754.0 948.3L751.0 948.2L748.0 948.3L745.0 948.8L742.0 949.5L739.0 950.5L736.0 951.7L733.0 953.3L730.0 955.0L727.0 956.7L724.0 958.5L721.0 960.1L718.0 961.5L715.0 962.7L712.0 963.5L709.0 964.1L706.0 964.4L703.0 964.4L700.0 964.1L697.0 963.5L694.0 962.7L691.0 961.5L688.0 960.1L685.0 958.5L682.0 956.7L679.0 955.0L676.0 953.3L673.0 951.7L670.0 950.5L667.0 949.5L664.0 948.8L661.0 948.3L658.0 948.2L655.0 948.3L652.0 948.8L649.0 949.5L646.0 950.5L643.0 951.7L640.0 953.3L637.0 955.0L634.0 956.7L631.0 958.5L628.0 960.1L625.0 961.5L622.0 962.7L619.0 963.5L616.0 964.1L613.0 964.4L610.0 964.4L607.0 964.1L604.0 963.5L601.0 962.7L598.0 961.5L595.0 960.1L592.0 958.5L589.0 956.7L586.0 955.0L583.0 953.3L580.0 951.7L577.0 950.5L574.0 949.5L571.0 948.8L568.0 948.3L565.0 948.2L562.0 948.3L559.0 948.8L556.0 949.5L553.0 950.5L550.0 951.7L547.0 953.3L544.0 955.0L541.0 956.7L538.0 958.5L535.0 960.1L532.0 961.5L529.0 962.7L526.0 963.5L523.0 964.1L520.0 964.4L517.0 964.4L514.0 964.1L511.0 963.5L508.0 962.7L505.0 961.5L502.0 960.1L499.0 958.5L496.0 956.7L493.0 955.0L490.0 953.3L487.0 951.7L484.0 950.5L481.0 949.5L478.0 948.8L475.0 948.3L472.0 948.2L469.0 948.3L466.0 948.8L463.0 949.5L460.0 950.5L457.0 951.7L454.0 953.3L451.0 955.0L448.0 956.7L445.0 958.5L442.0 960.1L439.0 961.5L436.0 962.7L433.0 963.5L430.0 964.1L427.0 964.4L424.0 964.4L421.0 964.1L418.0 963.5L415.0 962.7L412.0 961.5L409.0 960.1L406.0 958.5L403.0 956.7L400.0 955.0L397.0 953.3L394.0 951.7L391.0 950.5L388.0 949.5L385.0 948.8L382.0 948.3L379.0 948.2L376.0 948.3L373.0 948.8L370.0 949.5L367.0 950.5L364.0 951.7L361.0 953.3L358.0 955.0L355.0 956.7L352.0 958.5L349.0 960.1L346.0 961.5L343.0 962.7L340.0 963.5L337.0 964.1L334.0 964.4L331.0 964.4L328.0 964.1L325.0 963.5L322.0 962.7L319.0 961.5L316.0 960.1L313.0 958.5L310.0 956.7L307.0 955.0L304.0 953.3L301.0 951.7L298.0 950.5L295.0 949.5L292.0 948.8L289.0 948.3L286.0 948.2L283.0 948.3L280.0 948.8L277.0 949.5L274.0 950.5L271.0 951.7L268.0 953.3L265.0 955.0L262.0 956.7L259.0 958.5L256.0 960.1L253.0 961.5L250.0 962.7L247.0 963.5L244.0 964.1L241.0 964.4L238.0 964.4L235.0 964.1L232.0 963.5L229.0 962.7L226.0 961.5L223.0 960.1L220.0 958.5L217.0 956.7L214.0 955.0L211.0 953.3L208.0 951.7L205.0 950.5L202.0 949.5L199.0 948.8L196.0 948.3L193.0 948.2L190.0 948.3L187.0 948.8L184.0 949.5L181.0 950.5L178.0 951.7L175.0 953.3L172.0 955.0L169.0 956.7L166.0 958.5L163.0 960.1L160.0 961.5L157.0 962.7L154.0 963.5L151.0 964.1L148.0 964.4L145.0 964.4L142.0 964.1L139.0 963.5L136.0 962.7L133.0 961.5L130.0 960.1L127.0 958.5L124.0 956.7L121.0 955.0L118.0 953.3L115.0 951.7L112.0 950.5L109.0 949.5L106.0 948.8L103.0 948.3L100.0 948.2L97.0 948.3L94.0 948.8L91.0 949.5L88.0 950.5L85.0 951.7L82.0 953.3L79.0 955.0L76.0 956.7L73.0 958.5L70.0 960.1L67.0 961.5L64.0 962.7L61.0 963.5L58.0 964.1L55.0 964.4L52.0 964.4L49.0 964.1L46.0 963.5L43.0 962.7L40.0 961.5L37.0 960.1L34.0 958.5L31.0 956.7L28.0 955.0L25.0 953.3L22.0 951.7L19.0 950.5L16.0 949.5L13.0 948.8L10.0 948.3L7.0 948.2L4.0 948.3L1.0 948.8L-2.0 949.5L-5.0 950.5L-8.0 951.7L-11.0 953.3L-14.0 955.0L-17.0 956.7L-20.0 958.5L-23.0 960.1L-26.0 961.5L-29.0 962.7L-32.0 963.5L-35.0 964.1L-38.0 964.4L-41.0 964.4L-44.0 964.1L-47.0 963.5L-50.0 962.7L-53.0 961.5L-56.0 960.1L-59.0 958.5L-62.0 956.7L-65.0 955.0L-68.0 953.3L-71.0 951.7L-74.0 950.5L-77.0 949.5L-80.0 948.8L-83.0 948.3L-86.0 948.2z"/><path id="wt" d="M-86.0 919.8L-83.0 919.9L-80.0 920.4L-77.0 921.1L-74.0 922.1L-71.0 923.3L-68.0 924.9L-65.0 926.6L-62.0 928.3L-59.0 930.1L-56.0 931.7L-53.0 933.1L-50.0 934.3L-47.0 935.1L-44.0 935.7L-41.0 936.0L-38.0 936.0L-35.0 935.7L-32.0 935.1L-29.0 934.3L-26.0 933.1L-23.0 931.7L-20.0 930.1L-17.0 928.3L-14.0 926.6L-11.0 924.9L-8.0 923.3L-5.0 922.1L-2.0 921.1L1.0 920.4L4.0 919.9L7.0 919.8L10.0 919.9L13.0 920.4L16.0 921.1L19.0 922.1L22.0 923.3L25.0 924.9L28.0 926.6L31.0 928.3L34.0 930.1L37.0 931.7L40.0 933.1L43.0 934.3L46.0 935.1L49.0 935.7L52.0 936.0L55.0 936.0L58.0 935.7L61.0 935.1L64.0 934.3L67.0 933.1L70.0 931.7L73.0 930.1L76.0 928.3L79.0 926.6L82.0 924.9L85.0 923.3L88.0 922.1L91.0 921.1L94.0 920.4L97.0 919.9L100.0 919.8L103.0 919.9L106.0 920.4L109.0 921.1L112.0 922.1L115.0 923.3L118.0 924.9L121.0 926.6L124.0 928.3L127.0 930.1L130.0 931.7L133.0 933.1L136.0 934.3L139.0 935.1L142.0 935.7L145.0 936.0L148.0 936.0L151.0 935.7L154.0 935.1L157.0 934.3L160.0 933.1L163.0 931.7L166.0 930.1L169.0 928.3L172.0 926.6L175.0 924.9L178.0 923.3L181.0 922.1L184.0 921.1L187.0 920.4L190.0 919.9L193.0 919.8L196.0 919.9L199.0 920.4L202.0 921.1L205.0 922.1L208.0 923.3L211.0 924.9L214.0 926.6L217.0 928.3L220.0 930.1L223.0 931.7L226.0 933.1L229.0 934.3L232.0 935.1L235.0 935.7L238.0 936.0L241.0 936.0L244.0 935.7L247.0 935.1L250.0 934.3L253.0 933.1L256.0 931.7L259.0 930.1L262.0 928.3L265.0 926.6L268.0 924.9L271.0 923.3L274.0 922.1L277.0 921.1L280.0 920.4L283.0 919.9L286.0 919.8L289.0 919.9L292.0 920.4L295.0 921.1L298.0 922.1L301.0 923.3L304.0 924.9L307.0 926.6L310.0 928.3L313.0 930.1L316.0 931.7L319.0 933.1L322.0 934.3L325.0 935.1L328.0 935.7L331.0 936.0L334.0 936.0L337.0 935.7L340.0 935.1L343.0 934.3L346.0 933.1L349.0 931.7L352.0 930.1L355.0 928.3L358.0 926.6L361.0 924.9L364.0 923.3L367.0 922.1L370.0 921.1L373.0 920.4L376.0 919.9L379.0 919.8L382.0 919.9L385.0 920.4L388.0 921.1L391.0 922.1L394.0 923.3L397.0 924.9L400.0 926.6L403.0 928.3L406.0 930.1L409.0 931.7L412.0 933.1L415.0 934.3L418.0 935.1L421.0 935.7L424.0 936.0L427.0 936.0L430.0 935.7L433.0 935.1L436.0 934.3L439.0 933.1L442.0 931.7L445.0 930.1L448.0 928.3L451.0 926.6L454.0 924.9L457.0 923.3L460.0 922.1L463.0 921.1L466.0 920.4L469.0 919.9L472.0 919.8L475.0 919.9L478.0 920.4L481.0 921.1L484.0 922.1L487.0 923.3L490.0 924.9L493.0 926.6L496.0 928.3L499.0 930.1L502.0 931.7L505.0 933.1L508.0 934.3L511.0 935.1L514.0 935.7L517.0 936.0L520.0 936.0L523.0 935.7L526.0 935.1L529.0 934.3L532.0 933.1L535.0 931.7L538.0 930.1L541.0 928.3L544.0 926.6L547.0 924.9L550.0 923.3L553.0 922.1L556.0 921.1L559.0 920.4L562.0 919.9L565.0 919.8L568.0 919.9L571.0 920.4L574.0 921.1L577.0 922.1L580.0 923.3L583.0 924.9L586.0 926.6L589.0 928.3L592.0 930.1L595.0 931.7L598.0 933.1L601.0 934.3L604.0 935.1L607.0 935.7L610.0 936.0L613.0 936.0L616.0 935.7L619.0 935.1L622.0 934.3L625.0 933.1L628.0 931.7L631.0 930.1L634.0 928.3L637.0 926.6L640.0 924.9L643.0 923.3L646.0 922.1L649.0 921.1L652.0 920.4L655.0 919.9L658.0 919.8L661.0 919.9L664.0 920.4L667.0 921.1L670.0 922.1L673.0 923.3L676.0 924.9L679.0 926.6L682.0 928.3L685.0 930.1L688.0 931.7L691.0 933.1L694.0 934.3L697.0 935.1L700.0 935.7L703.0 936.0L706.0 936.0L709.0 935.7L712.0 935.1L715.0 934.3L718.0 933.1L721.0 931.7L724.0 930.1L727.0 928.3L730.0 926.6L733.0 924.9L736.0 923.3L739.0 922.1L742.0 921.1L745.0 920.4L748.0 919.9L751.0 919.8L754.0 919.9L757.0 920.4L760.0 921.1L763.0 922.1L766.0 923.3L769.0 924.9L772.0 926.6L775.0 928.3L778.0 930.1L781.0 931.7L784.0 933.1L787.0 934.3L790.0 935.1L793.0 935.7L796.0 936.0L799.0 936.0L802.0 935.7L805.0 935.1L808.0 934.3L811.0 933.1L814.0 931.7L817.0 930.1L820.0 928.3L823.0 926.6L826.0 924.9L829.0 923.3L832.0 922.1L835.0 921.1L838.0 920.4L841.0 919.9L844.0 919.8L847.0 919.9L850.0 920.4L853.0 921.1L856.0 922.1L859.0 923.3L862.0 924.9L865.0 926.6L868.0 928.3L871.0 930.1L874.0 931.7L877.0 933.1L880.0 934.3L883.0 935.1L886.0 935.7L889.0 936.0L892.0 936.0L895.0 935.7L898.0 935.1L901.0 934.3L904.0 933.1L907.0 931.7L910.0 930.1L913.0 928.3L916.0 926.6L919.0 924.9L922.0 923.3L925.0 922.1L928.0 921.1L931.0 920.4L934.0 919.9L937.0 919.8L940.0 919.9L943.0 920.4L946.0 921.1L949.0 922.1L952.0 923.3L955.0 924.9L958.0 926.6L961.0 928.3L964.0 930.1L967.0 931.7L970.0 933.1L973.0 934.3L976.0 935.1L979.0 935.7L982.0 936.0L985.0 936.0L988.0 935.7L991.0 935.1L994.0 934.3L997.0 933.1L1000.0 931.7L1003.0 930.1L1006.0 928.3L1009.0 926.6L1012.0 924.9L1015.0 923.3L1018.0 922.1L1021.0 921.1L1024.0 920.4L1027.0 919.9L1030.0 919.8L1033.0 919.9L1036.0 920.4L1039.0 921.1L1042.0 922.1L1045.0 923.3L1048.0 924.9L1051.0 926.6L1054.0 928.3L1057.0 930.1L1060.0 931.7L1063.0 933.1L1066.0 934.3L1069.0 935.1L1072.0 935.7L1075.0 936.0L1078.0 936.0L1081.0 935.7L1084.0 935.1L1087.0 934.3L1090.0 933.1L1093.0 931.7L1096.0 930.1L1099.0 928.3L1102.0 926.6L1105.0 924.9L1108.0 923.3L1111.0 922.1L1114.0 921.1L1117.0 920.4L1120.0 919.9L1123.0 919.8L1126.0 919.9L1129.0 920.4L1132.0 921.1L1135.0 922.1L1138.0 923.3L1141.0 924.9L1144.0 926.6L1147.0 928.3L1150.0 930.1L1153.0 931.7L1156.0 933.1L1159.0 934.3L1162.0 935.1L1165.0 935.7L1168.0 936.0L1171.0 936.0L1174.0 935.7L1177.0 935.1L1180.0 934.3L1183.0 933.1L1186.0 931.7L1189.0 930.1L1192.0 928.3L1195.0 926.6L1198.0 924.9L1201.0 923.3L1204.0 922.1L1207.0 921.1L1210.0 920.4L1213.0 919.9L1216.0 919.8L1219.0 919.9L1222.0 920.4L1225.0 921.1L1228.0 922.1L1231.0 923.3L1234.0 924.9L1237.0 926.6L1240.0 928.3L1243.0 930.1L1246.0 931.7L1249.0 933.1L1252.0 934.3L1255.0 935.1L1258.0 935.7L1261.0 936.0L1264.0 936.0L1267.0 935.7L1270.0 935.1L1273.0 934.3L1276.0 933.1L1279.0 931.7L1282.0 930.1L1285.0 928.3L1288.0 926.6L1291.0 924.9L1294.0 923.3L1297.0 922.1L1300.0 921.1L1303.0 920.4L1306.0 919.9L1309.0 919.8L1312.0 919.9L1315.0 920.4L1318.0 921.1L1321.0 922.1L1324.0 923.3L1327.0 924.9L1330.0 926.6L1333.0 928.3L1336.0 930.1L1339.0 931.7L1342.0 933.1L1345.0 934.3L1348.0 935.1L1351.0 935.7L1354.0 936.0L1357.0 936.0L1360.0 935.7L1363.0 935.1L1366.0 934.3L1369.0 933.1L1372.0 931.7L1375.0 930.1L1378.0 928.3L1381.0 926.6L1384.0 924.9L1387.0 923.3L1390.0 922.1L1393.0 921.1L1396.0 920.4L1399.0 919.9L1402.0 919.8L1405.0 919.9L1408.0 920.4L1411.0 921.1L1414.0 922.1L1417.0 923.3L1420.0 924.9L1423.0 926.6L1426.0 928.3L1429.0 930.1L1432.0 931.7L1435.0 933.1L1438.0 934.3L1441.0 935.1L1444.0 935.7L1447.0 936.0L1450.0 936.0L1453.0 935.7L1456.0 935.1L1459.0 934.3L1462.0 933.1L1465.0 931.7L1468.0 930.1L1471.0 928.3L1474.0 926.6L1477.0 924.9L1480.0 923.3L1483.0 922.1L1486.0 921.1L1489.0 920.4L1492.0 919.9L1495.0 919.8L1498.0 919.9L1501.0 920.4L1504.0 921.1L1507.0 922.1L1510.0 923.3L1513.0 924.9L1516.0 926.6L1519.0 928.3L1522.0 930.1L1525.0 931.7L1528.0 933.1L1531.0 934.3L1534.0 935.1L1537.0 935.7L1540.0 936.0L1543.0 936.0L1546.0 935.7L1549.0 935.1L1552.0 934.3L1555.0 933.1L1558.0 931.7L1561.0 930.1L1564.0 928.3L1567.0 926.6L1570.0 924.9L1573.0 923.3L1576.0 922.1L1579.0 921.1L1582.0 920.4L1585.0 919.9L1588.0 919.8L1591.0 919.9L1594.0 920.4L1597.0 921.1L1600.0 922.1L1603.0 923.3L1606.0 924.9L1609.0 926.6L1612.0 928.3L1615.0 930.1L1618.0 931.7L1621.0 933.1L1624.0 934.3L1627.0 935.1L1630.0 935.7L1633.0 936.0L1636.0 936.0L1639.0 935.7L1642.0 935.1L1645.0 934.3L1648.0 933.1L1651.0 931.7L1654.0 930.1L1657.0 928.3L1660.0 926.6L1663.0 924.9L1666.0 923.3L1669.0 922.1L1672.0 921.1L1675.0 920.4L1678.0 919.9L1681.0 919.8L1684.0 919.9L1687.0 920.4L1690.0 921.1L1693.0 922.1L1696.0 923.3L1699.0 924.9L1702.0 926.6L1705.0 928.3L1708.0 930.1L1711.0 931.7L1714.0 933.1L1717.0 934.3L1720.0 935.1L1723.0 935.7L1726.0 936.0L1729.0 936.0L1732.0 935.7L1735.0 935.1L1738.0 934.3L1741.0 933.1L1744.0 931.7L1747.0 930.1L1750.0 928.3L1753.0 926.6L1756.0 924.9L1759.0 923.3L1762.0 922.1L1765.0 921.1L1768.0 920.4L1771.0 919.9L1774.0 919.8L1777.0 919.9L1780.0 920.4L1783.0 921.1L1786.0 922.1L1789.0 923.3L1792.0 924.9L1795.0 926.6L1798.0 928.3L1801.0 930.1L1804.0 931.7L1807.0 933.1L1810.0 934.3L1813.0 935.1L1816.0 935.7L1819.0 936.0L1822.0 936.0L1825.0 935.7L1828.0 935.1L1831.0 934.3L1834.0 933.1L1837.0 931.7L1840.0 930.1L1843.0 928.3L1846.0 926.6L1849.0 924.9L1852.0 923.3L1855.0 922.1L1858.0 921.1L1861.0 920.4L1864.0 919.9L1867.0 919.8L1870.0 919.9L1873.0 920.4L1876.0 921.1L1879.0 922.1L1882.0 923.3L1885.0 924.9L1888.0 926.6L1891.0 928.3L1894.0 930.1L1897.0 931.7L1900.0 933.1L1903.0 934.3L1906.0 935.1L1909.0 935.7L1912.0 936.0L1915.0 936.0L1918.0 935.7L1921.0 935.1L1924.0 934.3L1927.0 933.1L1930.0 931.7L1933.0 930.1L1936.0 928.3L1939.0 926.6L1942.0 924.9"/><path id="wb" d="M-86.0 948.2L-83.0 948.3L-80.0 948.8L-77.0 949.5L-74.0 950.5L-71.0 951.7L-68.0 953.3L-65.0 955.0L-62.0 956.7L-59.0 958.5L-56.0 960.1L-53.0 961.5L-50.0 962.7L-47.0 963.5L-44.0 964.1L-41.0 964.4L-38.0 964.4L-35.0 964.1L-32.0 963.5L-29.0 962.7L-26.0 961.5L-23.0 960.1L-20.0 958.5L-17.0 956.7L-14.0 955.0L-11.0 953.3L-8.0 951.7L-5.0 950.5L-2.0 949.5L1.0 948.8L4.0 948.3L7.0 948.2L10.0 948.3L13.0 948.8L16.0 949.5L19.0 950.5L22.0 951.7L25.0 953.3L28.0 955.0L31.0 956.7L34.0 958.5L37.0 960.1L40.0 961.5L43.0 962.7L46.0 963.5L49.0 964.1L52.0 964.4L55.0 964.4L58.0 964.1L61.0 963.5L64.0 962.7L67.0 961.5L70.0 960.1L73.0 958.5L76.0 956.7L79.0 955.0L82.0 953.3L85.0 951.7L88.0 950.5L91.0 949.5L94.0 948.8L97.0 948.3L100.0 948.2L103.0 948.3L106.0 948.8L109.0 949.5L112.0 950.5L115.0 951.7L118.0 953.3L121.0 955.0L124.0 956.7L127.0 958.5L130.0 960.1L133.0 961.5L136.0 962.7L139.0 963.5L142.0 964.1L145.0 964.4L148.0 964.4L151.0 964.1L154.0 963.5L157.0 962.7L160.0 961.5L163.0 960.1L166.0 958.5L169.0 956.7L172.0 955.0L175.0 953.3L178.0 951.7L181.0 950.5L184.0 949.5L187.0 948.8L190.0 948.3L193.0 948.2L196.0 948.3L199.0 948.8L202.0 949.5L205.0 950.5L208.0 951.7L211.0 953.3L214.0 955.0L217.0 956.7L220.0 958.5L223.0 960.1L226.0 961.5L229.0 962.7L232.0 963.5L235.0 964.1L238.0 964.4L241.0 964.4L244.0 964.1L247.0 963.5L250.0 962.7L253.0 961.5L256.0 960.1L259.0 958.5L262.0 956.7L265.0 955.0L268.0 953.3L271.0 951.7L274.0 950.5L277.0 949.5L280.0 948.8L283.0 948.3L286.0 948.2L289.0 948.3L292.0 948.8L295.0 949.5L298.0 950.5L301.0 951.7L304.0 953.3L307.0 955.0L310.0 956.7L313.0 958.5L316.0 960.1L319.0 961.5L322.0 962.7L325.0 963.5L328.0 964.1L331.0 964.4L334.0 964.4L337.0 964.1L340.0 963.5L343.0 962.7L346.0 961.5L349.0 960.1L352.0 958.5L355.0 956.7L358.0 955.0L361.0 953.3L364.0 951.7L367.0 950.5L370.0 949.5L373.0 948.8L376.0 948.3L379.0 948.2L382.0 948.3L385.0 948.8L388.0 949.5L391.0 950.5L394.0 951.7L397.0 953.3L400.0 955.0L403.0 956.7L406.0 958.5L409.0 960.1L412.0 961.5L415.0 962.7L418.0 963.5L421.0 964.1L424.0 964.4L427.0 964.4L430.0 964.1L433.0 963.5L436.0 962.7L439.0 961.5L442.0 960.1L445.0 958.5L448.0 956.7L451.0 955.0L454.0 953.3L457.0 951.7L460.0 950.5L463.0 949.5L466.0 948.8L469.0 948.3L472.0 948.2L475.0 948.3L478.0 948.8L481.0 949.5L484.0 950.5L487.0 951.7L490.0 953.3L493.0 955.0L496.0 956.7L499.0 958.5L502.0 960.1L505.0 961.5L508.0 962.7L511.0 963.5L514.0 964.1L517.0 964.4L520.0 964.4L523.0 964.1L526.0 963.5L529.0 962.7L532.0 961.5L535.0 960.1L538.0 958.5L541.0 956.7L544.0 955.0L547.0 953.3L550.0 951.7L553.0 950.5L556.0 949.5L559.0 948.8L562.0 948.3L565.0 948.2L568.0 948.3L571.0 948.8L574.0 949.5L577.0 950.5L580.0 951.7L583.0 953.3L586.0 955.0L589.0 956.7L592.0 958.5L595.0 960.1L598.0 961.5L601.0 962.7L604.0 963.5L607.0 964.1L610.0 964.4L613.0 964.4L616.0 964.1L619.0 963.5L622.0 962.7L625.0 961.5L628.0 960.1L631.0 958.5L634.0 956.7L637.0 955.0L640.0 953.3L643.0 951.7L646.0 950.5L649.0 949.5L652.0 948.8L655.0 948.3L658.0 948.2L661.0 948.3L664.0 948.8L667.0 949.5L670.0 950.5L673.0 951.7L676.0 953.3L679.0 955.0L682.0 956.7L685.0 958.5L688.0 960.1L691.0 961.5L694.0 962.7L697.0 963.5L700.0 964.1L703.0 964.4L706.0 964.4L709.0 964.1L712.0 963.5L715.0 962.7L718.0 961.5L721.0 960.1L724.0 958.5L727.0 956.7L730.0 955.0L733.0 953.3L736.0 951.7L739.0 950.5L742.0 949.5L745.0 948.8L748.0 948.3L751.0 948.2L754.0 948.3L757.0 948.8L760.0 949.5L763.0 950.5L766.0 951.7L769.0 953.3L772.0 955.0L775.0 956.7L778.0 958.5L781.0 960.1L784.0 961.5L787.0 962.7L790.0 963.5L793.0 964.1L796.0 964.4L799.0 964.4L802.0 964.1L805.0 963.5L808.0 962.7L811.0 961.5L814.0 960.1L817.0 958.5L820.0 956.7L823.0 955.0L826.0 953.3L829.0 951.7L832.0 950.5L835.0 949.5L838.0 948.8L841.0 948.3L844.0 948.2L847.0 948.3L850.0 948.8L853.0 949.5L856.0 950.5L859.0 951.7L862.0 953.3L865.0 955.0L868.0 956.7L871.0 958.5L874.0 960.1L877.0 961.5L880.0 962.7L883.0 963.5L886.0 964.1L889.0 964.4L892.0 964.4L895.0 964.1L898.0 963.5L901.0 962.7L904.0 961.5L907.0 960.1L910.0 958.5L913.0 956.7L916.0 955.0L919.0 953.3L922.0 951.7L925.0 950.5L928.0 949.5L931.0 948.8L934.0 948.3L937.0 948.2L940.0 948.3L943.0 948.8L946.0 949.5L949.0 950.5L952.0 951.7L955.0 953.3L958.0 955.0L961.0 956.7L964.0 958.5L967.0 960.1L970.0 961.5L973.0 962.7L976.0 963.5L979.0 964.1L982.0 964.4L985.0 964.4L988.0 964.1L991.0 963.5L994.0 962.7L997.0 961.5L1000.0 960.1L1003.0 958.5L1006.0 956.7L1009.0 955.0L1012.0 953.3L1015.0 951.7L1018.0 950.5L1021.0 949.5L1024.0 948.8L1027.0 948.3L1030.0 948.2L1033.0 948.3L1036.0 948.8L1039.0 949.5L1042.0 950.5L1045.0 951.7L1048.0 953.3L1051.0 955.0L1054.0 956.7L1057.0 958.5L1060.0 960.1L1063.0 961.5L1066.0 962.7L1069.0 963.5L1072.0 964.1L1075.0 964.4L1078.0 964.4L1081.0 964.1L1084.0 963.5L1087.0 962.7L1090.0 961.5L1093.0 960.1L1096.0 958.5L1099.0 956.7L1102.0 955.0L1105.0 953.3L1108.0 951.7L1111.0 950.5L1114.0 949.5L1117.0 948.8L1120.0 948.3L1123.0 948.2L1126.0 948.3L1129.0 948.8L1132.0 949.5L1135.0 950.5L1138.0 951.7L1141.0 953.3L1144.0 955.0L1147.0 956.7L1150.0 958.5L1153.0 960.1L1156.0 961.5L1159.0 962.7L1162.0 963.5L1165.0 964.1L1168.0 964.4L1171.0 964.4L1174.0 964.1L1177.0 963.5L1180.0 962.7L1183.0 961.5L1186.0 960.1L1189.0 958.5L1192.0 956.7L1195.0 955.0L1198.0 953.3L1201.0 951.7L1204.0 950.5L1207.0 949.5L1210.0 948.8L1213.0 948.3L1216.0 948.2L1219.0 948.3L1222.0 948.8L1225.0 949.5L1228.0 950.5L1231.0 951.7L1234.0 953.3L1237.0 955.0L1240.0 956.7L1243.0 958.5L1246.0 960.1L1249.0 961.5L1252.0 962.7L1255.0 963.5L1258.0 964.1L1261.0 964.4L1264.0 964.4L1267.0 964.1L1270.0 963.5L1273.0 962.7L1276.0 961.5L1279.0 960.1L1282.0 958.5L1285.0 956.7L1288.0 955.0L1291.0 953.3L1294.0 951.7L1297.0 950.5L1300.0 949.5L1303.0 948.8L1306.0 948.3L1309.0 948.2L1312.0 948.3L1315.0 948.8L1318.0 949.5L1321.0 950.5L1324.0 951.7L1327.0 953.3L1330.0 955.0L1333.0 956.7L1336.0 958.5L1339.0 960.1L1342.0 961.5L1345.0 962.7L1348.0 963.5L1351.0 964.1L1354.0 964.4L1357.0 964.4L1360.0 964.1L1363.0 963.5L1366.0 962.7L1369.0 961.5L1372.0 960.1L1375.0 958.5L1378.0 956.7L1381.0 955.0L1384.0 953.3L1387.0 951.7L1390.0 950.5L1393.0 949.5L1396.0 948.8L1399.0 948.3L1402.0 948.2L1405.0 948.3L1408.0 948.8L1411.0 949.5L1414.0 950.5L1417.0 951.7L1420.0 953.3L1423.0 955.0L1426.0 956.7L1429.0 958.5L1432.0 960.1L1435.0 961.5L1438.0 962.7L1441.0 963.5L1444.0 964.1L1447.0 964.4L1450.0 964.4L1453.0 964.1L1456.0 963.5L1459.0 962.7L1462.0 961.5L1465.0 960.1L1468.0 958.5L1471.0 956.7L1474.0 955.0L1477.0 953.3L1480.0 951.7L1483.0 950.5L1486.0 949.5L1489.0 948.8L1492.0 948.3L1495.0 948.2L1498.0 948.3L1501.0 948.8L1504.0 949.5L1507.0 950.5L1510.0 951.7L1513.0 953.3L1516.0 955.0L1519.0 956.7L1522.0 958.5L1525.0 960.1L1528.0 961.5L1531.0 962.7L1534.0 963.5L1537.0 964.1L1540.0 964.4L1543.0 964.4L1546.0 964.1L1549.0 963.5L1552.0 962.7L1555.0 961.5L1558.0 960.1L1561.0 958.5L1564.0 956.7L1567.0 955.0L1570.0 953.3L1573.0 951.7L1576.0 950.5L1579.0 949.5L1582.0 948.8L1585.0 948.3L1588.0 948.2L1591.0 948.3L1594.0 948.8L1597.0 949.5L1600.0 950.5L1603.0 951.7L1606.0 953.3L1609.0 955.0L1612.0 956.7L1615.0 958.5L1618.0 960.1L1621.0 961.5L1624.0 962.7L1627.0 963.5L1630.0 964.1L1633.0 964.4L1636.0 964.4L1639.0 964.1L1642.0 963.5L1645.0 962.7L1648.0 961.5L1651.0 960.1L1654.0 958.5L1657.0 956.7L1660.0 955.0L1663.0 953.3L1666.0 951.7L1669.0 950.5L1672.0 949.5L1675.0 948.8L1678.0 948.3L1681.0 948.2L1684.0 948.3L1687.0 948.8L1690.0 949.5L1693.0 950.5L1696.0 951.7L1699.0 953.3L1702.0 955.0L1705.0 956.7L1708.0 958.5L1711.0 960.1L1714.0 961.5L1717.0 962.7L1720.0 963.5L1723.0 964.1L1726.0 964.4L1729.0 964.4L1732.0 964.1L1735.0 963.5L1738.0 962.7L1741.0 961.5L1744.0 960.1L1747.0 958.5L1750.0 956.7L1753.0 955.0L1756.0 953.3L1759.0 951.7L1762.0 950.5L1765.0 949.5L1768.0 948.8L1771.0 948.3L1774.0 948.2L1777.0 948.3L1780.0 948.8L1783.0 949.5L1786.0 950.5L1789.0 951.7L1792.0 953.3L1795.0 955.0L1798.0 956.7L1801.0 958.5L1804.0 960.1L1807.0 961.5L1810.0 962.7L1813.0 963.5L1816.0 964.1L1819.0 964.4L1822.0 964.4L1825.0 964.1L1828.0 963.5L1831.0 962.7L1834.0 961.5L1837.0 960.1L1840.0 958.5L1843.0 956.7L1846.0 955.0L1849.0 953.3L1852.0 951.7L1855.0 950.5L1858.0 949.5L1861.0 948.8L1864.0 948.3L1867.0 948.2L1870.0 948.3L1873.0 948.8L1876.0 949.5L1879.0 950.5L1882.0 951.7L1885.0 953.3L1888.0 955.0L1891.0 956.7L1894.0 958.5L1897.0 960.1L1900.0 961.5L1903.0 962.7L1906.0 963.5L1909.0 964.1L1912.0 964.4L1915.0 964.4L1918.0 964.1L1921.0 963.5L1924.0 962.7L1927.0 961.5L1930.0 960.1L1933.0 958.5L1936.0 956.7L1939.0 955.0L1942.0 953.3"/></defs><g style="filter:drop-shadow(0 4.5px 7px rgba(0,0,0,.4))"><use href="#wp" fill="#fff" stroke="#808080" stroke-width="3.5"/></g><use href="#wp" fill="#fff"/><use href="#wt" fill="none" stroke="#808080" stroke-width="3.5"/><use href="#wb" fill="none" stroke="#808080" stroke-width="3.5"/></svg>
</div></body></html>
